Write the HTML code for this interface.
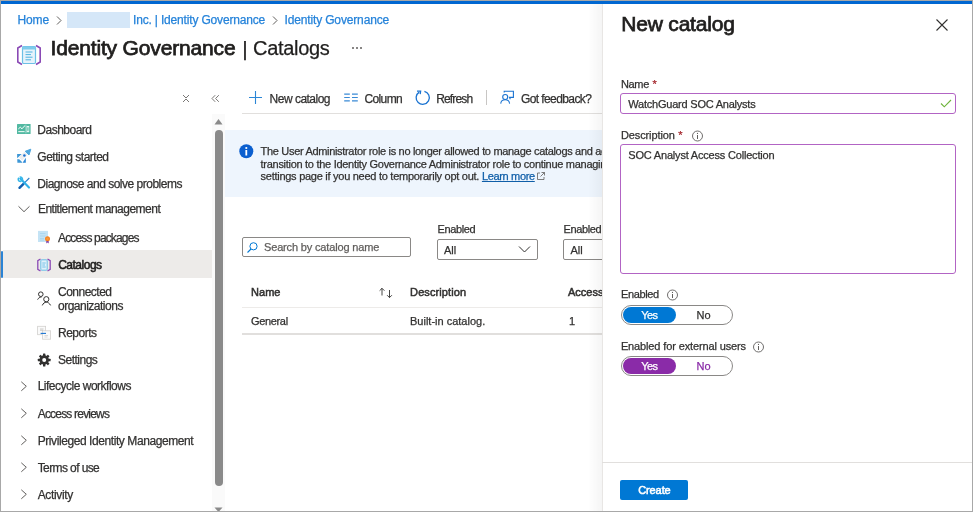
<!DOCTYPE html>
<html><head><meta charset="utf-8"><style>
html,body{margin:0;padding:0;width:973px;height:512px;overflow:hidden;background:#fff}
body{position:relative;font-family:"Liberation Sans", sans-serif}
.t{position:absolute;white-space:nowrap;font-family:"Liberation Sans", sans-serif;-webkit-text-stroke-width:0.25px}
body{-webkit-font-smoothing:antialiased}
#root{position:absolute;left:0;top:0;width:973px;height:512px;will-change:transform}
svg{overflow:visible}
</style></head><body><div id="root">
<div style="position:absolute;left:0px;top:0px;width:973px;height:512px;background:#fff"></div>
<div style="position:absolute;left:0px;top:1px;width:973px;height:3px;background:#0067d1"></div>
<div class="t" style="left:17.50px;top:13.84px;font-size:12px;line-height:12px;font-weight:400;color:#2583da;letter-spacing:-0.15px;">Home</div>
<svg style="position:absolute;left:55px;top:14px" width="8" height="12" viewBox="0 0 8 12"><path d="M2 2.5 L6 6.5 L2 10.5" fill="none" stroke="#605e5c" stroke-width="1"/></svg>
<div style="position:absolute;left:67px;top:12px;width:63px;height:16px;background:#d5e7f8"></div>
<div class="t" style="left:133.00px;top:13.84px;font-size:12px;line-height:12px;font-weight:400;color:#2583da;letter-spacing:-0.17px;">Inc. | Identity Governance</div>
<svg style="position:absolute;left:271px;top:14px" width="8" height="12" viewBox="0 0 8 12"><path d="M2 2.5 L6 6.5 L2 10.5" fill="none" stroke="#605e5c" stroke-width="1"/></svg>
<div class="t" style="left:284.50px;top:13.84px;font-size:12px;line-height:12px;font-weight:400;color:#2583da;letter-spacing:-0.15px;">Identity Governance</div>
<svg style="position:absolute;left:16px;top:44px" width="26" height="22" viewBox="0 0 26 22">
<path d="M6 1.5 L1.8 4 L1.8 18 L6 20.5" fill="none" stroke="#8a4ab5" stroke-width="1.6"/>
<path d="M20 1.5 L24.2 4 L24.2 18 L20 20.5" fill="none" stroke="#8a4ab5" stroke-width="1.6"/>
<rect x="6.5" y="2.5" width="13" height="17" rx="1.2" fill="#e6f3fb" stroke="#6cc0e6" stroke-width="1.2"/>
<rect x="6.5" y="2.5" width="13" height="3" fill="#7ecbeb"/>
<path d="M9.5 8 H16.5 M9.5 10.6 H15 M9.5 13.2 H16.5 M9.5 15.8 H15" stroke="#4fb3e0" stroke-width="1"/>
</svg>
<div class="t" style="left:50.50px;top:37.22px;font-size:21px;line-height:21px;font-weight:400;color:#201f1e;letter-spacing:-0.16px;-webkit-text-stroke:0.75px #201f1e">Identity Governance</div>
<div class="t" style="left:242.20px;top:38.22px;font-size:21px;line-height:21px;font-weight:400;color:#201f1e;letter-spacing:0px;">|</div>
<div class="t" style="left:253.00px;top:38.07px;font-size:20px;line-height:20px;font-weight:400;color:#201f1e;letter-spacing:-0.3px;">Catalogs</div>
<svg style="position:absolute;left:350px;top:45px" width="14" height="6" viewBox="0 0 14 6"><circle cx="3" cy="3" r="1" fill="#605e5c"/><circle cx="7" cy="3" r="1" fill="#605e5c"/><circle cx="11" cy="3" r="1" fill="#605e5c"/></svg>
<svg style="position:absolute;left:181px;top:93px" width="10" height="11" viewBox="0 0 10 11"><path d="M2 2 L5 5 L8 2 M2 9 L5 6 L8 9" fill="none" stroke="#7a7876" stroke-width="1"/></svg>
<svg style="position:absolute;left:209px;top:93px" width="12" height="11" viewBox="0 0 12 11"><path d="M6.2 2.2 L3 5.5 L6.2 8.8 M9.8 2.2 L6.6 5.5 L9.8 8.8" fill="none" stroke="#7a7876" stroke-width="1"/></svg>
<div style="position:absolute;left:212px;top:114px;width:13px;height:398px;background:#fafafa"></div>
<svg style="position:absolute;left:212px;top:116px" width="13" height="10" viewBox="0 0 13 10"><path d="M2.5 8.5 L6.5 3 L10.5 8.5 Z" fill="#8a8a8a"/></svg>
<div style="position:absolute;left:215px;top:129.5px;width:8px;height:356px;background:#8a8a8a;border-radius:4px"></div>
<svg style="position:absolute;left:212px;top:505px" width="13" height="7" viewBox="0 0 13 7"><path d="M2.5 2.5 L6.5 7 L10.5 2.5 Z" fill="#8a8a8a"/></svg>
<div style="position:absolute;left:3px;top:250px;width:209px;height:28px;background:#edebe9"></div>
<div style="position:absolute;left:1px;top:250.5px;width:1.5px;height:27px;background:#2a83d5;border-radius:1px"></div>
<svg style="position:absolute;left:14px;top:119px" width="20" height="20" viewBox="0 0 20 20"><rect x="3" y="4.9" width="13.6" height="10.1" rx="0.5" fill="#52b9a2"/>
<path d="M4.3 10 L6.3 8.2 L8 9.8 L10.3 7.2 L11 6.5" fill="none" stroke="#fff" stroke-width="1"/>
<path d="M4.3 12.6 H10.6" stroke="#e5f6f1" stroke-width="1.1"/>
<path d="M11.9 5.5 V14.4" stroke="#c9ece3" stroke-width="0.6"/>
<rect x="12.6" y="7" width="2.6" height="6.2" fill="#e8f7f3"/><rect x="13.2" y="8.3" width="1.4" height="3.5" fill="#6cc4af"/></svg>
<div class="t" style="left:37.30px;top:123.94px;font-size:12px;line-height:12px;font-weight:400;color:#323130;letter-spacing:-0.5px;">Dashboard</div>
<svg style="position:absolute;left:14px;top:146px" width="20" height="20" viewBox="0 0 20 20"><path d="M11.2 5.3 L16.8 3.2 L15 9 Z" fill="#4fa6dd" stroke="#4fa6dd" stroke-width="1" stroke-linejoin="round"/>
<path d="M3.1 8 L7.8 8 L3.1 12.3 Z" fill="#3d97d6"/>
<path d="M3.2 13.2 L5.2 13.2 L8.3 16.3 L8 16.8 L3.4 16.8 Z" fill="#3d97d6"/>
<path d="M11.8 11.8 L11.8 16.8 L8.6 16.8 Z" fill="#2b88d8"/>
<path d="M5.3 11.3 L10.4 6.2 L13.2 9 L8.1 14.1 Z" fill="#eeeeee" stroke="#dde9f3" stroke-width="0.6"/>
<circle cx="10.4" cy="9.4" r="1.25" fill="#1a6fd1"/></svg>
<div class="t" style="left:37.30px;top:150.94px;font-size:12px;line-height:12px;font-weight:400;color:#323130;letter-spacing:-0.5px;">Getting started</div>
<svg style="position:absolute;left:14px;top:173px" width="20" height="20" viewBox="0 0 20 20"><path d="M5.5 14.8 L9.5 10.8" stroke="#0f5fb0" stroke-width="2.4" stroke-linecap="round"/>
<path d="M9.5 10.8 L15.3 5" stroke="#2b7fc8" stroke-width="1.1"/>
<path d="M6.3 5.6 L15 14.6" stroke="#2fb0e8" stroke-width="2.1" stroke-linecap="round"/>
<path d="M4.8 4.8 C3.8 6 4 8.4 6.5 8.5 L8.5 6.6 C8.6 4.3 6.6 3.6 5.8 4.3" fill="none" stroke="#35b7ea" stroke-width="1.6"/></svg>
<div class="t" style="left:37.30px;top:178.34px;font-size:12px;line-height:12px;font-weight:400;color:#323130;letter-spacing:-0.5px;">Diagnose and solve problems</div>
<svg style="position:absolute;left:17px;top:204px" width="14" height="10" viewBox="0 0 14 10"><path d="M1.5 2.3 L7 7.7 L12.5 2.3" fill="none" stroke="#605e5c" stroke-width="1"/></svg>
<div class="t" style="left:37.90px;top:203.34px;font-size:12px;line-height:12px;font-weight:400;color:#323130;letter-spacing:-0.5px;">Entitlement management</div>
<svg style="position:absolute;left:34px;top:227px" width="20" height="20" viewBox="0 0 20 20"><rect x="4" y="3.9" width="10" height="11.1" fill="#c4e3f5"/>
<path d="M6 6.5 H11.5 M6 9 H11.5 M6 11.5 H10 M6 13 H10" stroke="#a9d6ef" stroke-width="0.9"/>
<path d="M12.3 13.5 L12.3 16.6 L13.5 15.6 L14.7 16.6 L14.7 13.5 Z" fill="#7a3aa8"/>
<circle cx="13.5" cy="11.8" r="2.5" fill="#f7801e"/><circle cx="13.5" cy="11.8" r="1.3" fill="#f99a3a"/></svg>
<div class="t" style="left:58.00px;top:232.14px;font-size:12px;line-height:12px;font-weight:400;color:#323130;letter-spacing:-0.85px;">Access packages</div>
<svg style="position:absolute;left:36px;top:258px" width="16" height="14" viewBox="0 0 16 14"><path d="M4.5 1 L1.8 2.6 L1.8 11.4 L4.5 13" fill="none" stroke="#8a4ab5" stroke-width="1.3"/>
<path d="M11.5 1 L14.2 2.6 L14.2 11.4 L11.5 13" fill="none" stroke="#8a4ab5" stroke-width="1.3"/>
<rect x="4.8" y="1.8" width="6.4" height="10.4" rx="0.8" fill="#dff0fa" stroke="#6cc0e6" stroke-width="1"/>
<path d="M6.3 5 H9.7 M6.3 7 H9 M6.3 9 H9.7" stroke="#5cb8e4" stroke-width="0.8"/></svg>
<div class="t" style="left:58.20px;top:259.34px;font-size:12px;line-height:12px;font-weight:400;color:#201f1e;letter-spacing:-0.5px;-webkit-text-stroke:0.55px #201f1e">Catalogs</div>
<svg style="position:absolute;left:36px;top:290px" width="16" height="17" viewBox="0 0 16 17"><circle cx="4.8" cy="4.2" r="2.3" fill="none" stroke="#323130" stroke-width="1"/>
<path d="M1.6 9.6 C2.4 8.1 3.6 7.1 5.6 7" fill="none" stroke="#323130" stroke-width="1"/>
<circle cx="10.3" cy="9.2" r="2.6" fill="none" stroke="#323130" stroke-width="1"/>
<path d="M6.3 15.4 C7.2 13.3 8.6 12.2 10.3 12.2 C12 12.2 13.5 13.3 14.6 15.4" fill="none" stroke="#323130" stroke-width="1"/></svg>
<div class="t" style="left:58.00px;top:285.84px;font-size:12px;line-height:12px;font-weight:400;color:#323130;letter-spacing:-0.5px;">Connected</div>
<div class="t" style="left:58.00px;top:300.14px;font-size:12px;line-height:12px;font-weight:400;color:#323130;letter-spacing:-0.5px;">organizations</div>
<svg style="position:absolute;left:34px;top:322px" width="20" height="20" viewBox="0 0 20 20"><rect x="3.6" y="4.3" width="8" height="8.4" fill="#fafafa" stroke="#d2d0ce" stroke-width="0.8"/>
<rect x="8.6" y="8.8" width="8" height="8.4" fill="#fafafa" stroke="#d2d0ce" stroke-width="0.8"/>
<path d="M6 7 H9.5 M6 8.3 H9" stroke="#b3b0ad" stroke-width="0.6"/>
<path d="M10.5 13.5 H14 M10.5 15 H13.5" stroke="#c8c6c4" stroke-width="0.6"/>
<path d="M6.6 11.4 H12" stroke="#1a73d1" stroke-width="1.1"/></svg>
<div class="t" style="left:58.00px;top:327.44px;font-size:12px;line-height:12px;font-weight:400;color:#323130;letter-spacing:-0.5px;">Reports</div>
<svg style="position:absolute;left:34px;top:350px" width="20" height="20" viewBox="0 0 20 20"><g transform="translate(10.2,10)"><rect x="-1.2" y="-6.4" width="2.4" height="6.4" rx="0.5" transform="rotate(0)" fill="#323130"/><rect x="-1.2" y="-6.4" width="2.4" height="6.4" rx="0.5" transform="rotate(45)" fill="#323130"/><rect x="-1.2" y="-6.4" width="2.4" height="6.4" rx="0.5" transform="rotate(90)" fill="#323130"/><rect x="-1.2" y="-6.4" width="2.4" height="6.4" rx="0.5" transform="rotate(135)" fill="#323130"/><rect x="-1.2" y="-6.4" width="2.4" height="6.4" rx="0.5" transform="rotate(180)" fill="#323130"/><rect x="-1.2" y="-6.4" width="2.4" height="6.4" rx="0.5" transform="rotate(225)" fill="#323130"/><rect x="-1.2" y="-6.4" width="2.4" height="6.4" rx="0.5" transform="rotate(270)" fill="#323130"/><rect x="-1.2" y="-6.4" width="2.4" height="6.4" rx="0.5" transform="rotate(315)" fill="#323130"/><circle r="4.7" fill="#323130"/><circle r="2" fill="#fff"/></g></svg>
<div class="t" style="left:58.00px;top:354.34px;font-size:12px;line-height:12px;font-weight:400;color:#323130;letter-spacing:-0.5px;">Settings</div>
<svg style="position:absolute;left:19px;top:380px" width="10" height="12" viewBox="0 0 10 12"><path d="M2.3 1.8 L7.3 6.3 L2.3 10.8" fill="none" stroke="#605e5c" stroke-width="1"/></svg>
<div class="t" style="left:37.70px;top:380.34px;font-size:12px;line-height:12px;font-weight:400;color:#323130;letter-spacing:-0.5px;">Lifecycle workflows</div>
<svg style="position:absolute;left:19px;top:407.2px" width="10" height="12" viewBox="0 0 10 12"><path d="M2.3 1.8 L7.3 6.3 L2.3 10.8" fill="none" stroke="#605e5c" stroke-width="1"/></svg>
<div class="t" style="left:37.70px;top:407.54px;font-size:12px;line-height:12px;font-weight:400;color:#323130;letter-spacing:-0.8px;">Access reviews</div>
<svg style="position:absolute;left:19px;top:434.3px" width="10" height="12" viewBox="0 0 10 12"><path d="M2.3 1.8 L7.3 6.3 L2.3 10.8" fill="none" stroke="#605e5c" stroke-width="1"/></svg>
<div class="t" style="left:37.70px;top:434.64px;font-size:12px;line-height:12px;font-weight:400;color:#323130;letter-spacing:-0.42px;">Privileged Identity Management</div>
<svg style="position:absolute;left:19px;top:461.2px" width="10" height="12" viewBox="0 0 10 12"><path d="M2.3 1.8 L7.3 6.3 L2.3 10.8" fill="none" stroke="#605e5c" stroke-width="1"/></svg>
<div class="t" style="left:37.70px;top:461.54px;font-size:12px;line-height:12px;font-weight:400;color:#323130;letter-spacing:-0.6px;">Terms of use</div>
<svg style="position:absolute;left:19px;top:488.2px" width="10" height="12" viewBox="0 0 10 12"><path d="M2.3 1.8 L7.3 6.3 L2.3 10.8" fill="none" stroke="#605e5c" stroke-width="1"/></svg>
<div class="t" style="left:37.70px;top:488.54px;font-size:12px;line-height:12px;font-weight:400;color:#323130;letter-spacing:-0.35px;">Activity</div>
<svg style="position:absolute;left:248px;top:90px" width="15" height="15" viewBox="0 0 15 15"><path d="M7.5 1 V14 M1 7.5 H14" stroke="#2b86d6" stroke-width="1.1"/></svg>
<div class="t" style="left:269.60px;top:92.74px;font-size:12px;line-height:12px;font-weight:400;color:#323130;letter-spacing:-0.51px;">New catalog</div>
<svg style="position:absolute;left:340px;top:88px" width="20" height="20" viewBox="0 0 20 20"><path d="M4.2 6.1 H9.8 M4.2 9.5 H9.8 M4.2 12.9 H9.8 M12 6.1 H17.8 M12 9.5 H17.8 M12 12.9 H17.8" stroke="#3a8ad6" stroke-width="1.2"/></svg>
<div class="t" style="left:364.40px;top:92.74px;font-size:12px;line-height:12px;font-weight:400;color:#323130;letter-spacing:-0.6px;">Column</div>
<svg style="position:absolute;left:412px;top:88px" width="20" height="20" viewBox="0 0 20 20"><path d="M12.4 3.3 A6.6 6.6 0 1 1 7.2 4.1" fill="none" stroke="#1a73d1" stroke-width="1.3"/><path d="M5 3.2 L8.6 3.2 L8.2 6.2" fill="none" stroke="#1a73d1" stroke-width="1.3"/></svg>
<div class="t" style="left:436.20px;top:92.74px;font-size:12px;line-height:12px;font-weight:400;color:#323130;letter-spacing:-0.85px;">Refresh</div>
<div style="position:absolute;left:486px;top:90px;width:1px;height:15px;background:#c8c6c4"></div>
<svg style="position:absolute;left:497px;top:87px" width="20" height="20" viewBox="0 0 20 20"><path d="M7.2 5.6 V4.2 H16.4 V10.4 H12.5 L13.3 12.3" fill="none" stroke="#1a73d1" stroke-width="1.1"/>
<circle cx="8.2" cy="10" r="2.5" fill="none" stroke="#1a73d1" stroke-width="1.1"/>
<path d="M3.7 16.6 C4 14 5.8 12.8 8.2 12.8 C10.6 12.8 12.3 14 12.6 16.6" fill="none" stroke="#1a73d1" stroke-width="1.1"/></svg>
<div class="t" style="left:521.00px;top:92.74px;font-size:12px;line-height:12px;font-weight:400;color:#323130;letter-spacing:-0.6px;">Got feedback?</div>
<div style="position:absolute;left:242px;top:113px;width:361px;height:1px;background:#e1dfdd"></div>
<div style="position:absolute;left:225px;top:130px;width:378px;height:67px;background:#eef5fd"></div>
<svg style="position:absolute;left:239px;top:144px" width="15" height="15" viewBox="0 0 15 15"><circle cx="7.3" cy="7.3" r="7" fill="#0b5fcf"/><rect x="6.4" y="6" width="1.8" height="5.5" fill="#fff"/><circle cx="7.3" cy="4" r="1.1" fill="#fff"/></svg>
<div class="t" style="left:260.60px;top:146.29px;font-size:11px;line-height:11px;font-weight:400;color:#323130;letter-spacing:-0.32px;">The User Administrator role is no longer allowed to manage catalogs and access packages.</div>
<div class="t" style="left:260.60px;top:158.89px;font-size:11px;line-height:11px;font-weight:400;color:#323130;letter-spacing:-0.29px;">transition to the Identity Governance Administrator role to continue managing catalogs.</div>
<div class="t" style="left:260.60px;top:171.49px;font-size:11px;line-height:11px;font-weight:400;color:#323130;letter-spacing:-0.27px;">settings page if you need to temporarily opt out. <span style="color:#0f5ea8;text-decoration:underline;letter-spacing:-0.34px">Learn more</span></div>
<svg style="position:absolute;left:535.5px;top:171px" width="10" height="10" viewBox="0 0 10 10"><path d="M4 2 H1.5 V8.5 H8 V6" fill="none" stroke="#605e5c" stroke-width="0.8"/><path d="M5.5 1.5 H8.5 V4.5 M8.5 1.5 L4.5 5.5" fill="none" stroke="#605e5c" stroke-width="0.8"/></svg>
<div style="position:absolute;left:242px;top:237px;width:169px;height:20px;box-sizing:border-box;border:1px solid #8a8886;border-radius:2px;background:#fff"></div>
<svg style="position:absolute;left:246px;top:241px" width="13" height="13" viewBox="0 0 13 13"><circle cx="7.5" cy="5.3" r="3.6" fill="none" stroke="#0078d4" stroke-width="1"/><path d="M5 8 L1.5 11.5" stroke="#0078d4" stroke-width="1.1"/></svg>
<div class="t" style="left:264.00px;top:242.19px;font-size:11px;line-height:11px;font-weight:400;color:#605e5c;letter-spacing:-0.16px;">Search by catalog name</div>
<div class="t" style="left:437.40px;top:224.09px;font-size:11px;line-height:11px;font-weight:400;color:#323130;letter-spacing:-0.34px;">Enabled</div>
<div style="position:absolute;left:437px;top:239px;width:101px;height:21px;box-sizing:border-box;border:1px solid #8a8886;border-radius:2px;background:#fff"></div>
<div class="t" style="left:444.00px;top:244.69px;font-size:11px;line-height:11px;font-weight:400;color:#323130;letter-spacing:0px;">All</div>
<svg style="position:absolute;left:517px;top:244px" width="15" height="10" viewBox="0 0 15 10"><path d="M2 2.5 L7.5 8 L13 2.5" fill="none" stroke="#323130" stroke-width="1"/></svg>
<div class="t" style="left:563.40px;top:224.09px;font-size:11px;line-height:11px;font-weight:400;color:#323130;letter-spacing:-0.34px;">Enabled</div>
<div style="position:absolute;left:563px;top:239px;width:60px;height:21px;box-sizing:border-box;border:1px solid #8a8886;border-radius:2px;background:#fff"></div>
<div class="t" style="left:570.50px;top:244.69px;font-size:11px;line-height:11px;font-weight:400;color:#323130;letter-spacing:0px;">All</div>
<div class="t" style="left:251.10px;top:286.89px;font-size:11px;line-height:11px;font-weight:400;color:#323130;letter-spacing:0px;-webkit-text-stroke:0.5px #323130">Name</div>
<svg style="position:absolute;left:378px;top:286px" width="17" height="13" viewBox="0 0 17 13"><path d="M4 9.5 V2.3 M1.6 4.7 L4 2.3 L6.4 4.7" fill="none" stroke="#323130" stroke-width="0.9"/><path d="M11.5 4 V11.6 M9.1 9.2 L11.5 11.6 L13.9 9.2" fill="none" stroke="#323130" stroke-width="0.9"/></svg>
<div class="t" style="left:410.10px;top:286.89px;font-size:11px;line-height:11px;font-weight:400;color:#323130;letter-spacing:0.1px;-webkit-text-stroke:0.5px #323130">Description</div>
<div class="t" style="left:568.00px;top:286.89px;font-size:11px;line-height:11px;font-weight:400;color:#323130;letter-spacing:0px;-webkit-text-stroke:0.5px #323130">Access</div>
<div style="position:absolute;left:242px;top:307px;width:361px;height:1px;background:#edebe9"></div>
<div class="t" style="left:250.90px;top:315.79px;font-size:11px;line-height:11px;font-weight:400;color:#323130;letter-spacing:-0.32px;">General</div>
<div class="t" style="left:410.00px;top:315.79px;font-size:11px;line-height:11px;font-weight:400;color:#323130;letter-spacing:0px;">Built-in catalog.</div>
<div class="t" style="left:569.00px;top:315.79px;font-size:11px;line-height:11px;font-weight:400;color:#323130;letter-spacing:0px;">1</div>
<div style="position:absolute;left:242px;top:333px;width:361px;height:1.5px;background:#e1dfdd"></div>
<div style="position:absolute;left:588px;top:4px;width:15px;height:508px;background:linear-gradient(to right, rgba(0,0,0,0), rgba(0,0,0,0.045))"></div>
<div style="position:absolute;left:602px;top:4px;width:371px;height:508px;background:#fff;border-left:1px solid #e8e6e4"></div>
<div class="t" style="left:621.30px;top:13.32px;font-size:21px;line-height:21px;font-weight:400;color:#201f1e;letter-spacing:-0.2px;-webkit-text-stroke:0.75px #201f1e">New catalog</div>
<svg style="position:absolute;left:934px;top:17px" width="16" height="16" viewBox="0 0 16 16"><path d="M2.5 2.5 L13.5 13.5 M13.5 2.5 L2.5 13.5" stroke="#323130" stroke-width="1.1"/></svg>
<div class="t" style="left:620.90px;top:79.09px;font-size:11px;line-height:11px;font-weight:400;color:#323130;letter-spacing:-0.3px;">Name<span style="color:#a4262c;margin-left:3.5px">*</span></div>
<div style="position:absolute;left:620px;top:93px;width:336px;height:21px;box-sizing:border-box;border:1.8px solid #b264c4;border-radius:3px"></div>
<div class="t" style="left:628.30px;top:98.89px;font-size:11px;line-height:11px;font-weight:400;color:#323130;letter-spacing:-0.22px;">WatchGuard SOC Analysts</div>
<svg style="position:absolute;left:939px;top:98px" width="14" height="11" viewBox="0 0 14 11"><path d="M2 5.5 L5.3 8.8 L12 2" fill="none" stroke="#6fb43c" stroke-width="1.15"/></svg>
<div class="t" style="left:620.90px;top:129.59px;font-size:11px;line-height:11px;font-weight:400;color:#323130;letter-spacing:-0.1px;">Description<span style="color:#a4262c;margin-left:3.5px">*</span></div>
<svg style="position:absolute;left:691px;top:130px" width="13" height="12" viewBox="0 0 13 12"><circle cx="6.5" cy="6" r="5" fill="none" stroke="#605e5c" stroke-width="0.9"/><path d="M6.5 5 V9" stroke="#605e5c" stroke-width="1"/><circle cx="6.5" cy="3.4" r="0.6" fill="#605e5c"/></svg>
<div style="position:absolute;left:620px;top:144px;width:336px;height:129.5px;box-sizing:border-box;border:1.8px solid #b264c4;border-radius:3px"></div>
<div class="t" style="left:628.30px;top:149.69px;font-size:11px;line-height:11px;font-weight:400;color:#323130;letter-spacing:-0.19px;">SOC Analyst Access Collection</div>
<div class="t" style="left:620.90px;top:289.19px;font-size:11px;line-height:11px;font-weight:400;color:#323130;letter-spacing:-0.34px;">Enabled</div>
<svg style="position:absolute;left:666px;top:289px" width="13" height="12" viewBox="0 0 13 12"><circle cx="6.5" cy="6" r="5" fill="none" stroke="#605e5c" stroke-width="0.9"/><path d="M6.5 5 V9" stroke="#605e5c" stroke-width="1"/><circle cx="6.5" cy="3.4" r="0.6" fill="#605e5c"/></svg>
<div style="position:absolute;left:620.5px;top:305px;width:112px;height:20px;box-sizing:border-box;border:1px solid #8a8886;border-radius:10px;background:#fff"></div>
<div style="position:absolute;left:622.7px;top:307.3px;width:53px;height:15.6px;background:#0078d4;border-radius:8px"></div>
<div class="t" style="left:641.30px;top:309.69px;font-size:11px;line-height:11px;font-weight:400;color:#fff;letter-spacing:-0.6px;">Yes</div>
<div class="t" style="left:696.60px;top:309.69px;font-size:11px;line-height:11px;font-weight:400;color:#323130;letter-spacing:0px;">No</div>
<div class="t" style="left:620.90px;top:341.29px;font-size:11px;line-height:11px;font-weight:400;color:#323130;letter-spacing:-0.13px;">Enabled for external users</div>
<svg style="position:absolute;left:752px;top:341px" width="13" height="12" viewBox="0 0 13 12"><circle cx="6.5" cy="6" r="5" fill="none" stroke="#605e5c" stroke-width="0.9"/><path d="M6.5 5 V9" stroke="#605e5c" stroke-width="1"/><circle cx="6.5" cy="3.4" r="0.6" fill="#605e5c"/></svg>
<div style="position:absolute;left:620.5px;top:356px;width:112px;height:20px;box-sizing:border-box;border:1px solid #8a8886;border-radius:10px;background:#fff"></div>
<div style="position:absolute;left:622.7px;top:358.3px;width:53px;height:15.6px;background:#8a2ba8;border-radius:8px"></div>
<div class="t" style="left:641.30px;top:360.69px;font-size:11px;line-height:11px;font-weight:400;color:#fff;letter-spacing:-0.6px;">Yes</div>
<div class="t" style="left:696.60px;top:360.69px;font-size:11px;line-height:11px;font-weight:400;color:#8a2ba8;letter-spacing:0px;">No</div>
<div style="position:absolute;left:602px;top:462px;width:371px;height:1px;background:#e1dfdd"></div>
<div style="position:absolute;left:620.4px;top:479.6px;width:68px;height:20.5px;background:#0078d4;border-radius:2px"></div>
<div class="t" style="left:638.20px;top:484.69px;font-size:11px;line-height:11px;font-weight:400;color:#fff;letter-spacing:-0.1px;-webkit-text-stroke:0.55px #fff">Create</div>
<div style="position:absolute;left:0px;top:0px;width:973px;height:1px;background:#a8a8a8"></div>
<div style="position:absolute;left:0px;top:0px;width:1px;height:512px;background:#a8a8a8"></div>
<div style="position:absolute;left:972px;top:0px;width:1px;height:512px;background:#a8a8a8"></div>
<div style="position:absolute;left:0px;top:511px;width:973px;height:1px;background:#a8a8a8"></div>
</div></body></html>
